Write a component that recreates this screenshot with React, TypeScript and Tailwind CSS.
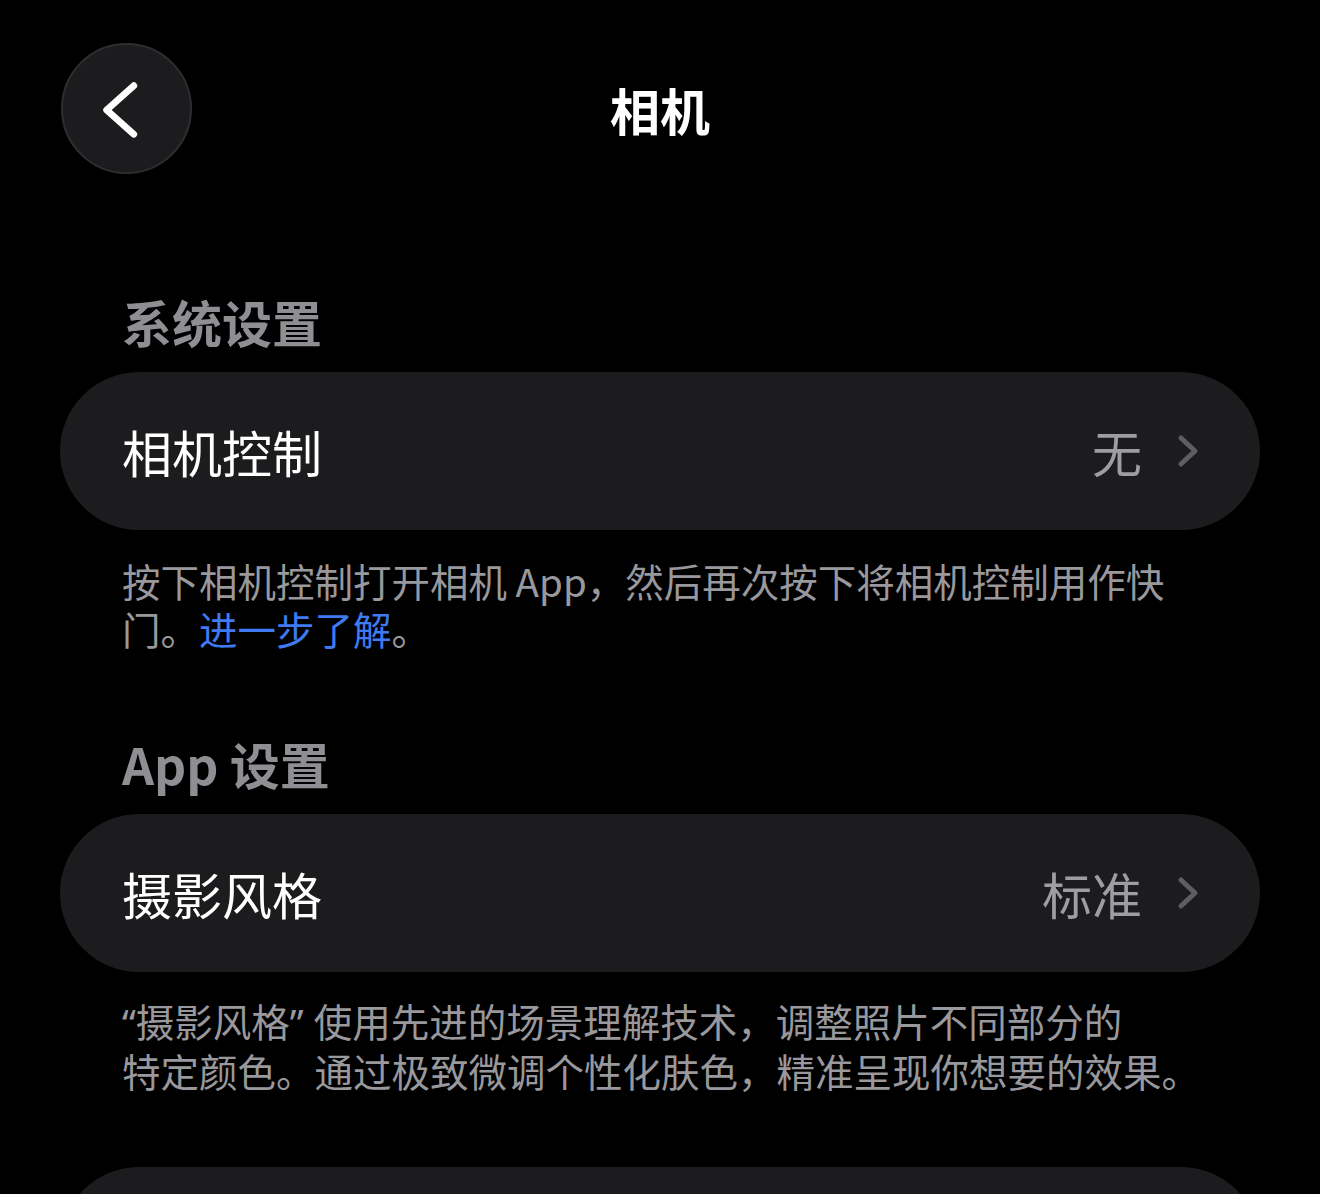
function Chevron() {
  return (
    <svg width="24" height="34" viewBox="0 0 24 34" fill="none" className="shrink-0">
      <path d="M5 4 L19 17 L5 30" stroke="#5e5e62" strokeWidth="5" strokeLinecap="round" strokeLinejoin="round" />
    </svg>
  )
}

function Row({ label, value }: { label: string; value: string }) {
  return (
    <div className="h-[158px] rounded-[79px] bg-[#1c1c1e] flex items-center justify-between pl-[62px] pr-[60px]">
      <span className="text-[50px] leading-none text-white">{label}</span>
      <div className="flex items-center gap-[34px]">
        <span className="text-[50px] leading-none text-[#9d9da2]">{value}</span>
        <Chevron />
      </div>
    </div>
  )
}

function SectionTitle({ children }: { children: React.ReactNode }) {
  return <div className="px-[62px] text-[50px] leading-[58px] font-semibold text-[#8e8e93]">{children}</div>
}

export default function App() {
  return (
    <div className="w-full h-[1194px] bg-black overflow-hidden font-['Noto_Sans_CJK_SC','Noto_Sans',sans-serif]">
      {/* Nav */}
      <div className="grid grid-cols-[131px_1fr_131px] items-center px-[61px] pt-[43px]">
        <button className="w-[131px] h-[131px] rounded-full bg-[#1c1c1e] border-2 border-[#2e2e30] flex items-center justify-center">
          <svg width="131" height="131" viewBox="0 0 131 131" fill="none">
            <path d="M73 42 L45 67 L73 92" stroke="white" strokeWidth="7" strokeLinecap="round" strokeLinejoin="round" />
          </svg>
        </button>
        <div className="text-center text-[50px] leading-none font-bold text-white">相机</div>
        <div />
      </div>

      <div className="px-[60px]">
        <div className="mt-[118px]">
          <SectionTitle>系统设置</SectionTitle>
        </div>
        <div className="mt-[22px]">
          <Row label="相机控制" value="无" />
        </div>
        <p className="mt-[26px] pl-[62px] whitespace-nowrap text-[38.5px] leading-[48px] text-[#98989d]">
          按下相机控制打开相机 App，然后再次按下将相机控制用作快
          <br />
          门。<span className="text-[#3f7af2]">进一步了解</span>。
        </p>

        <div className="mt-[82px]">
          <SectionTitle>App 设置</SectionTitle>
        </div>
        <div className="mt-[22px]">
          <Row label="摄影风格" value="标准" />
        </div>
        <p className="mt-[24px] pl-[62px] whitespace-nowrap text-[38.5px] leading-[48px] text-[#98989d]">
          <span className="font-['Noto_Sans',sans-serif]">“</span>摄影风格<span className="font-['Noto_Sans',sans-serif]">” </span>使用先进的场景理解技术，调整照片不同部分的
          <br />
          特定颜色。通过极致微调个性化肤色，精准呈现你想要的效果。
        </p>

        <div className="mt-[73px] h-[158px] rounded-[79px] bg-[#1c1c1e]" />
      </div>
    </div>
  )
}
